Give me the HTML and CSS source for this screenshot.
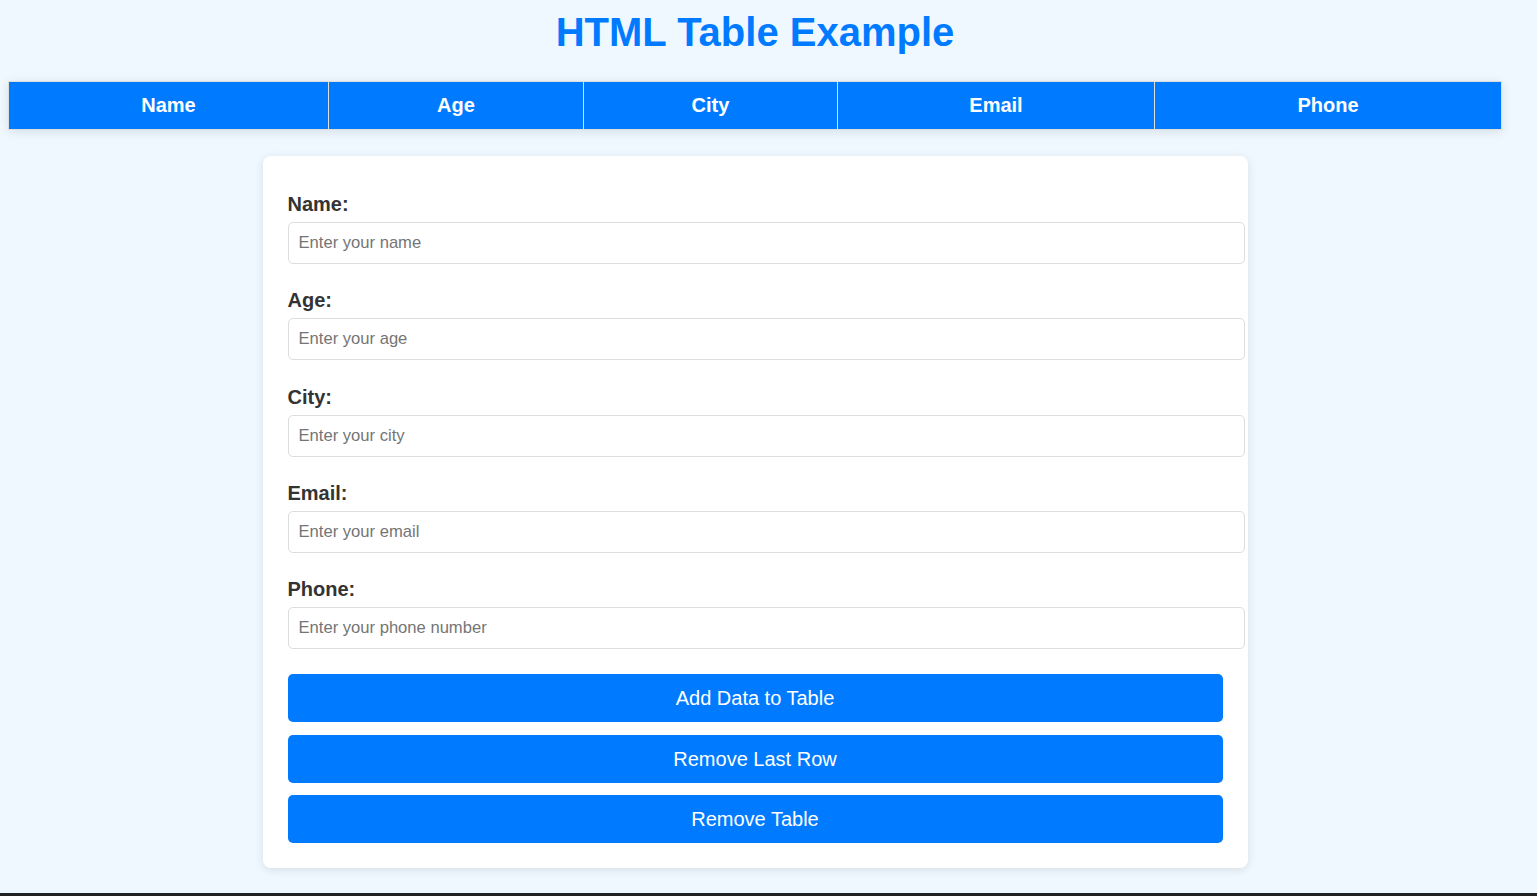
FILE: index.html
```html
<!DOCTYPE html>
<html lang="en">
<head>
<meta charset="utf-8">
<title>HTML Table Example</title>
<link rel="stylesheet" href="styles.css">
</head>
<body>
<div class="page">
  <h1 class="title">HTML Table Example</h1>
  <table class="data-table">
    <thead>
      <tr>
        <th class="col-name">Name</th>
        <th class="col-age">Age</th>
        <th class="col-city">City</th>
        <th class="col-email">Email</th>
        <th class="col-phone">Phone</th>
      </tr>
    </thead>
  </table>
  <form class="card">
    <label class="field-label" for="name">Name:</label>
    <input class="field-input" id="name" type="text" placeholder="Enter your name">
    <label class="field-label" for="age">Age:</label>
    <input class="field-input" id="age" type="text" placeholder="Enter your age">
    <label class="field-label" for="city">City:</label>
    <input class="field-input" id="city" type="text" placeholder="Enter your city">
    <label class="field-label" for="email">Email:</label>
    <input class="field-input" id="email" type="text" placeholder="Enter your email">
    <label class="field-label" for="phone">Phone:</label>
    <input class="field-input" id="phone" type="text" placeholder="Enter your phone number">
    <button class="btn" type="button">Add Data to Table</button>
    <button class="btn" type="button">Remove Last Row</button>
    <button class="btn" type="button">Remove Table</button>
  </form>
  <div class="bottom-bar"></div>
</div>
</body>
</html>
```
FILE: styles.css
```css
html, body {
  margin: 0;
  padding: 0;
  background: #f0f8ff;
}
body {
  font-family: "Liberation Sans", Arial, sans-serif;
  color: #333;
}
.page {
  width: 1494px;
  padding: 0 8px;
  display: flex;
  flex-direction: column;
}
.title {
  margin: 9px 0 26px;
  font-size: 40px;
  font-weight: bold;
  line-height: 46px;
  color: #007bff;
  text-align: center;
}
.data-table {
  width: 1494px;
  border-collapse: separate;
  border-spacing: 0;
  table-layout: fixed;
  box-shadow: 0 2px 10px rgba(0, 0, 0, 0.1);
}
.data-table th {
  box-sizing: border-box;
  background: #007bff;
  color: #fff;
  font-size: 20px;
  font-weight: bold;
  line-height: 23px;
  padding: 12px;
  border: 1px solid #ddd;
  text-align: center;
}
.data-table th + th {
  border-left: none;
}
.col-name { width: 321px; }
.col-age { width: 255px; }
.col-city { width: 254px; }
.col-email { width: 317px; }
.col-phone { width: 347px; }
.card {
  width: 935px;
  margin: 26px auto 0;
  padding: 13px 25px 25px;
  background: #fff;
  border-radius: 8px;
  box-shadow: 0 2px 10px rgba(0, 0, 0, 0.1);
  display: flex;
  flex-direction: column;
  align-items: flex-start;
}
.field-label {
  display: block;
  margin: 24px 0 6px;
  font-size: 20px;
  font-weight: bold;
  line-height: 23px;
  color: #333;
}
.field-input + .field-label {
  margin-top: 12px;
}
.field-input {
  width: 100%;
  box-sizing: content-box;
  margin: 0 0 13.25px;
  padding: 10px;
  border: 1px solid #ddd;
  border-radius: 5px;
  background: #fff;
  font-family: "Liberation Sans", Arial, sans-serif;
  font-size: 16.6px;
  line-height: 20px;
  height: 20px;
  color: #333;
  outline: none;
}
.field-input::placeholder {
  color: #757575;
}
.btn {
  width: 100%;
  margin: 12.5px 0 0;
  padding: 12px;
  height: 48px;
  border: none;
  border-radius: 5px;
  background: #007bff;
  color: #fff;
  font-family: "Liberation Sans", Arial, sans-serif;
  font-size: 20px;
  line-height: 24px;
  cursor: pointer;
}
.field-input + .btn {
  margin-top: 12px;
}
.bottom-bar {
  margin: 25px -8px 0;
  width: 1537px;
  height: 3px;
  background: #222;
}
```
